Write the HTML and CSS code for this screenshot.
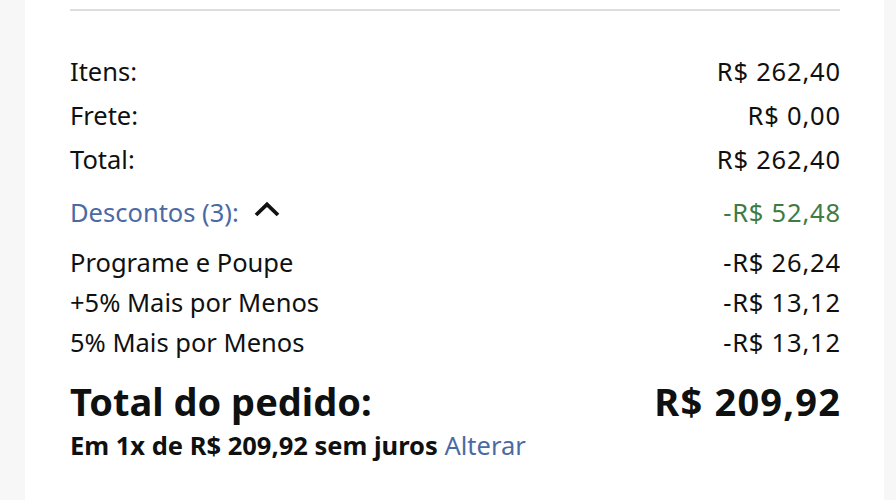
FILE: index.html
```html
<!DOCTYPE html>
<html lang="pt-BR">

<head>
    <meta charset="UTF-8">
    <title>Resumo do pedido</title>

    <link rel="stylesheet" href="styles.css">
</head>

<body>
    <div class="card">
        <div class="divider"></div>
        <ul class="summary">
            <li class="row"><span>Itens:</span><span class="amount">R$ 262,40</span></li>
            <li class="row"><span>Frete:</span><span class="amount">R$ 0,00</span></li>
            <li class="row"><span>Total:</span><span class="amount">R$ 262,40</span></li>
        </ul>
        <div class="discount-head">
            <a class="toggle" href="#">Descontos (3):
                <svg class="chevron" width="28" height="16" viewBox="0 0 28 16">
                    <path d="M3 14 L14 3.5 L25 14" fill="none" stroke="#111" stroke-width="3.8" />
                </svg>
            </a>
            <span class="amount green">-R$ 52,48</span>
        </div>
        <ul class="discounts">
            <li class="row"><span>Programe e Poupe</span><span class="amount">-R$ 26,24</span></li>
            <li class="row"><span>+5% Mais por Menos</span><span class="amount">-R$ 13,12</span></li>
            <li class="row"><span>5% Mais por Menos</span><span class="amount">-R$ 13,12</span></li>
        </ul>
        <div class="grand">
            <span>Total do pedido:</span><span class="amount">R$ 209,92</span>
        </div>
        <p class="installments">Em 1x de R$ 209,92 sem juros <a href="#">Alterar</a></p>
    </div>
</body>

</html>
```

FILE: styles.css
```css
* {
    margin: 0;
    padding: 0;
}

body {
    background: #f7f7f7;
    font-family: "Noto Sans", "Open Sans", sans-serif;
    color: #0f1111;
}

ul {
    list-style: none;
}

a {
    text-decoration: none;
    color: #4a6aa3;
}

.card {
    background: #fff;
    margin: 0 12px 0 25px;
    padding: 9px 44px 0 45px;
    height: 491px;
}

.divider {
    height: 2px;
    background: #dddddd;
}

.summary {
    margin-top: 38px;
}

.row {
    display: flex;
    justify-content: space-between;
    font-size: 25.5px;
}

/* os valores sao mais largos que o texto */
.amount {
    letter-spacing: 0.8px;
    margin-right: -0.8px;
}

.summary .row {
    line-height: 44px;
}

.discount-head {
    display: flex;
    justify-content: space-between;
    align-items: center;
    font-size: 25.5px;
    line-height: 40px;
    margin-top: 11px;
}

.toggle {
    display: flex;
    align-items: center;
}

.chevron {
    margin-left: 14px;
    margin-top: -6px;
}

.green {
    color: #3d7c45;
}

.discounts {
    margin-top: 10px;
}

.discounts .row {
    line-height: 40px;
}

.grand {
    display: flex;
    justify-content: space-between;
    font-size: 38px;
    font-weight: bold;
    line-height: 48px;
    margin-top: 15px;
}

.grand .amount {
    letter-spacing: 1.2px;
    margin-right: -1.2px;
}

.installments {
    font-size: 25.5px;
    font-weight: bold;
    line-height: 40px;
}

.installments a {
    font-weight: normal;
}
```
